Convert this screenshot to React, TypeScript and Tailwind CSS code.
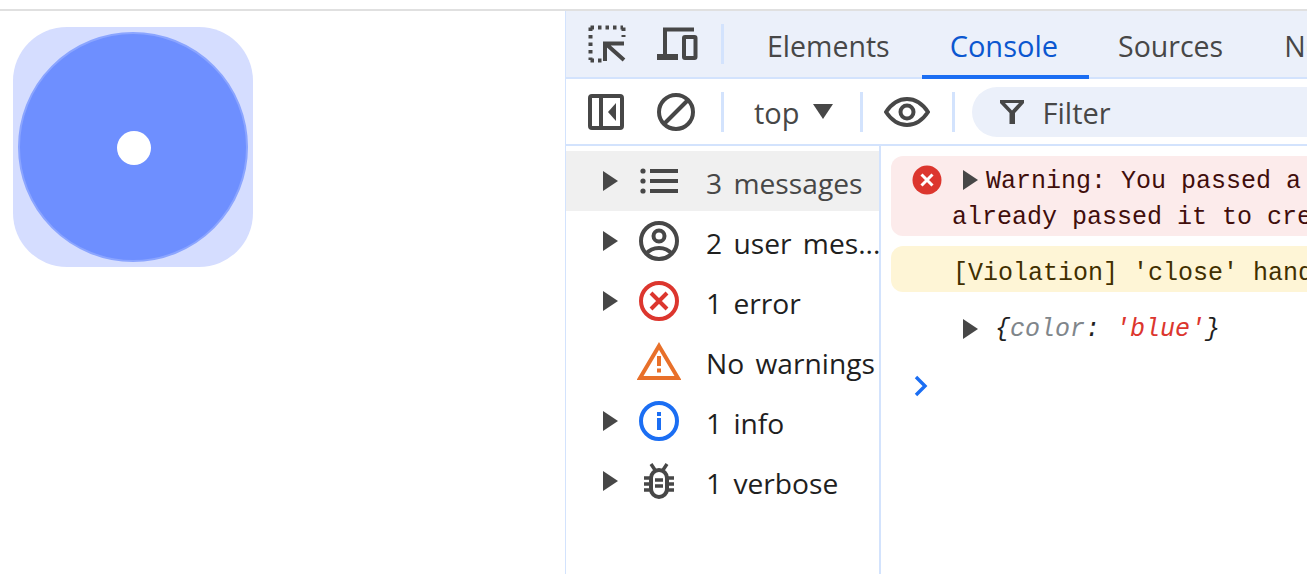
const UI = "font-['Open_Sans','Noto_Sans',sans-serif]";
const MONO = "font-['Liberation_Mono',monospace]";

function Triangle() {
  return (
    <svg width="15" height="20" viewBox="0 0 15 20" className="shrink-0">
      <path d="M0 0 L15 10 L0 20 Z" fill="#474747" />
    </svg>
  );
}

function Sep() {
  return <div className="w-[3px] h-10 bg-[#d3e3fd] shrink-0" />;
}

function InspectIcon() {
  return (
    <svg width="38" height="38" viewBox="0 0 38 38" className="shrink-0" fill="none" stroke="#474747">
      <path d="M2.5 2.5 H35 M2.5 2.5 V35 M2.5 35.5 H14 M35.5 2.5 V12" strokeWidth="4" strokeDasharray="3.5 4" />
      <path d="M17 36 V18.5 H36 M18 19 L36 35" strokeWidth="4" />
    </svg>
  );
}

function DeviceIcon() {
  return (
    <svg width="42" height="34" viewBox="0 0 42 34" className="shrink-0" fill="none" stroke="#474747" strokeWidth="4">
      <path d="M38 2.5 H9 V30" />
      <path d="M1 30 H22" strokeWidth="6" />
      <rect x="28" y="10" width="11.5" height="21" rx="1" />
    </svg>
  );
}

function PanelIcon() {
  return (
    <svg width="36" height="36" viewBox="0 0 36 36" className="shrink-0">
      <rect x="2" y="2" width="32" height="32" rx="2" fill="none" stroke="#474747" strokeWidth="4" />
      <rect x="11" y="2" width="4" height="32" fill="#474747" />
      <path d="M28 9 V27 L20 18 Z" fill="#474747" />
    </svg>
  );
}

function BlockIcon() {
  return (
    <svg width="38" height="38" viewBox="0 0 38 38" className="shrink-0" fill="none" stroke="#474747" strokeWidth="4">
      <circle cx="19" cy="19" r="17" />
      <path d="M7 31 L31 7" />
    </svg>
  );
}

function EyeIcon() {
  return (
    <svg width="46" height="30" viewBox="0 0 46 30" className="shrink-0" fill="none" stroke="#474747" strokeWidth="4">
      <path d="M2 15 C8 6 15 2 23 2 C31 2 38 6 44 15 C38 24 31 28 23 28 C15 28 8 24 2 15 Z" />
      <circle cx="23" cy="15" r="6.5" />
    </svg>
  );
}

function FilterIcon() {
  return (
    <svg width="24" height="24" viewBox="0 0 24 24" className="shrink-0">
      <path d="M0 0 H24 V3 L15 13 V24 H9.5 V13 L0 3 Z M5 3 L12 10.5 L19 3 Z" fill="#474747" fillRule="evenodd" />
    </svg>
  );
}

function ListIcon() {
  return (
    <svg width="38" height="26" viewBox="0 0 38 26" fill="#474747">
      <circle cx="3" cy="3" r="2.6" />
      <circle cx="3" cy="13" r="2.6" />
      <circle cx="3" cy="23" r="2.6" />
      <rect x="10" y="1" width="28" height="4" />
      <rect x="10" y="11" width="28" height="4" />
      <rect x="10" y="21" width="28" height="4" />
    </svg>
  );
}

function UserIcon() {
  return (
    <svg width="40" height="40" viewBox="0 0 40 40" fill="none" stroke="#474747" strokeWidth="4">
      <circle cx="20" cy="20" r="18" />
      <circle cx="20" cy="15" r="5.5" />
      <path d="M7 33 C11 28 15 27 20 27 C25 27 29 28 33 33" />
    </svg>
  );
}

function ErrorIcon() {
  return (
    <svg width="40" height="40" viewBox="0 0 40 40" fill="none" stroke="#dc362e" strokeWidth="4">
      <circle cx="20" cy="20" r="18" />
      <path d="M12 12 L28 28 M28 12 L12 28" />
    </svg>
  );
}

function WarningIcon() {
  return (
    <svg width="44" height="38" viewBox="0 0 44 38" fill="none">
      <path d="M22 4 L41 36 H3 Z" stroke="#e8702a" strokeWidth="4" />
      <rect x="20" y="14" width="4" height="10" fill="#e8702a" />
      <rect x="20" y="26.5" width="4" height="4" fill="#e8702a" />
    </svg>
  );
}

function InfoIcon() {
  return (
    <svg width="40" height="40" viewBox="0 0 40 40" fill="none">
      <circle cx="20" cy="20" r="18" stroke="#1b6ef3" strokeWidth="4" />
      <rect x="18" y="17" width="4" height="12" fill="#1b6ef3" />
      <rect x="18" y="11" width="4" height="4" fill="#1b6ef3" />
    </svg>
  );
}

function BugIcon() {
  return (
    <svg width="30" height="36" viewBox="0 0 30 36" fill="none" stroke="#474747">
      <path d="M7 1 L11 7 M23 1 L19 7" strokeWidth="3.4" />
      <rect x="7" y="7" width="16" height="27" rx="8" strokeWidth="4" />
      <path d="M0 15 H7 M0 21 H7 M0 27 H7 M23 15 H30 M23 21 H30 M23 27 H30" strokeWidth="3.4" />
      <path d="M11 17 H19 M11 23 H19" strokeWidth="3.4" />
    </svg>
  );
}

function ErrorBadge() {
  return (
    <svg width="30" height="30" viewBox="0 0 30 30" className="shrink-0">
      <circle cx="15" cy="15" r="14.5" fill="#dc362e" />
      <path d="M9.5 9.5 L20.5 20.5 M20.5 9.5 L9.5 20.5" stroke="#fff" strokeWidth="3" />
    </svg>
  );
}

const filters = [
  { label: '3 messages', icon: <ListIcon />, arrow: true, active: true },
  { label: '2 user mes...', icon: <UserIcon />, arrow: true },
  { label: '1 error', icon: <ErrorIcon />, arrow: true },
  { label: 'No warnings', icon: <WarningIcon />, arrow: false },
  { label: '1 info', icon: <InfoIcon />, arrow: true },
  { label: '1 verbose', icon: <BugIcon />, arrow: true },
];

export default function App() {
  return (
    <div className={`w-[1307px] h-[574px] overflow-hidden bg-white ${UI}`}>
      <div className="h-[9px]" />
      <div className="h-[2px] bg-[#e0e0e0]" />
      <div className="flex h-[563px]">
        <div className="w-[565px] shrink-0 pl-[13px] pt-4">
          <div className="w-60 h-60 rounded-[54px] bg-[#d5ddff] flex items-center justify-center">
            <div className="w-[230px] h-[230px] rounded-full bg-[#6e8fff] border-2 border-[#8ba5ff] flex items-center justify-center">
              <div className="w-[34px] h-[34px] rounded-full bg-white ml-[2px] mt-[2px]" />
            </div>
          </div>
        </div>

        <div className="flex-1 min-w-0 border-l border-[#d3e3fd] flex flex-col">
          {/* tabs */}
          <div className="h-[68px] shrink-0 bg-[#ebf0fa] border-b-2 border-[#d3e3fd] flex items-center pl-[22px] text-[28.5px] text-[#474747] whitespace-nowrap">
            <InspectIcon />
            <div className="ml-[30px]"><DeviceIcon /></div>
            <div className="ml-[23px]"><Sep /></div>
            <div className="ml-[13px] h-[68px] -mb-[2px] pt-[3px] pl-[30px] pr-[32px] flex items-center">Elements</div>
            <div className="h-[68px] -mb-[2px] pt-[6px] pl-[28px] pr-[31px] flex items-center text-[29px] text-[#0b57d0] border-b-4 border-[#1b6ef3]">Console</div>
            <div className="h-[68px] -mb-[2px] pt-[3px] pl-[29px] pr-[30px] flex items-center">Sources</div>
            <div className="h-[68px] -mb-[2px] pt-[3px] pl-[31px] flex items-center">Network</div>
          </div>

          {/* toolbar */}
          <div className="h-[67px] shrink-0 border-b-2 border-[#d3e3fd] flex items-center pl-[22px] text-[29px] text-[#474747] whitespace-nowrap">
            <PanelIcon />
            <div className="ml-[33px]"><BlockIcon /></div>
            <div className="ml-[26px]"><Sep /></div>
            <span className="ml-[30px] pt-[2px]">top</span>
            <svg width="20" height="15" viewBox="0 0 20 15" className="ml-[13px] shrink-0">
              <path d="M0 0 H20 L10 15 Z" fill="#474747" />
            </svg>
            <div className="ml-[27px]"><Sep /></div>
            <div className="ml-[21px]"><EyeIcon /></div>
            <div className="ml-[22px]"><Sep /></div>
            <div className="ml-[17px] flex-1 h-[50px] rounded-l-[25px] bg-[#ebf0fa] flex items-center pl-[28px]">
              <FilterIcon />
              <span className="ml-[19px] pt-[2px]">Filter</span>
            </div>
          </div>

          <div className="flex-1 flex min-h-0">
            {/* sidebar */}
            <div className="w-[315px] shrink-0 pt-[5px] border-r-2 border-[#d3e3fd]">
              {filters.map((f) => (
                <div
                  key={f.label}
                  className={`h-[60px] flex items-center text-[28.2px] [word-spacing:4px] ${f.active ? 'bg-[#f0f0f0] text-[#474747]' : 'text-[#1f1f1f]'}`}
                >
                  <div className="w-[52px] pl-[37px] shrink-0 flex items-center">
                    {f.arrow && <Triangle />}
                  </div>
                  <div className="w-[52px] ml-[15px] shrink-0 flex items-center justify-center">{f.icon}</div>
                  <span className="ml-[21px] pt-1 whitespace-nowrap">{f.label}</span>
                </div>
              ))}
            </div>

            {/* console */}
            <div className={`flex-1 min-w-0 overflow-hidden pt-[10px] pl-[10px] whitespace-nowrap text-[25px] ${MONO}`}>
              <div className="h-20 rounded-l-xl bg-[#fcebeb] text-[#410e0b] leading-9 pt-[6px]">
                <div className="flex items-center h-9 pl-[21px]">
                  <ErrorBadge />
                  <div className="ml-[21px]"><Triangle /></div>
                  <span className="ml-[8px] pt-1">Warning: You passed a container to the second argument</span>
                </div>
                <div className="pl-[61px] pt-[2px]">already passed it to createRoot</div>
              </div>
              <div className="mt-[10px] h-[46px] rounded-l-xl bg-[#fef5d6] text-[#412f00] flex items-center pl-[62px] pt-[9px]">
                [Violation] 'close' handler took 300ms
              </div>
              <div className="mt-[13px] h-[48px] flex items-center pl-[72px] italic text-[#1f1f1f]">
                <Triangle />
                <span className="ml-[17px] pt-[2px]">
                  {'{'}<span className="text-[#80868b]">color</span>: <span className="text-[#dc362e]">'blue'</span>{'}'}
                </span>
              </div>
              <div className="mt-[22px] pl-[23px]">
                <svg width="14" height="22" viewBox="0 0 14 22" fill="none" stroke="#1b6ef3" strokeWidth="3.4">
                  <path d="M2 2 L11 11 L2 20" />
                </svg>
              </div>
            </div>
          </div>
        </div>
      </div>
    </div>
  );
}
